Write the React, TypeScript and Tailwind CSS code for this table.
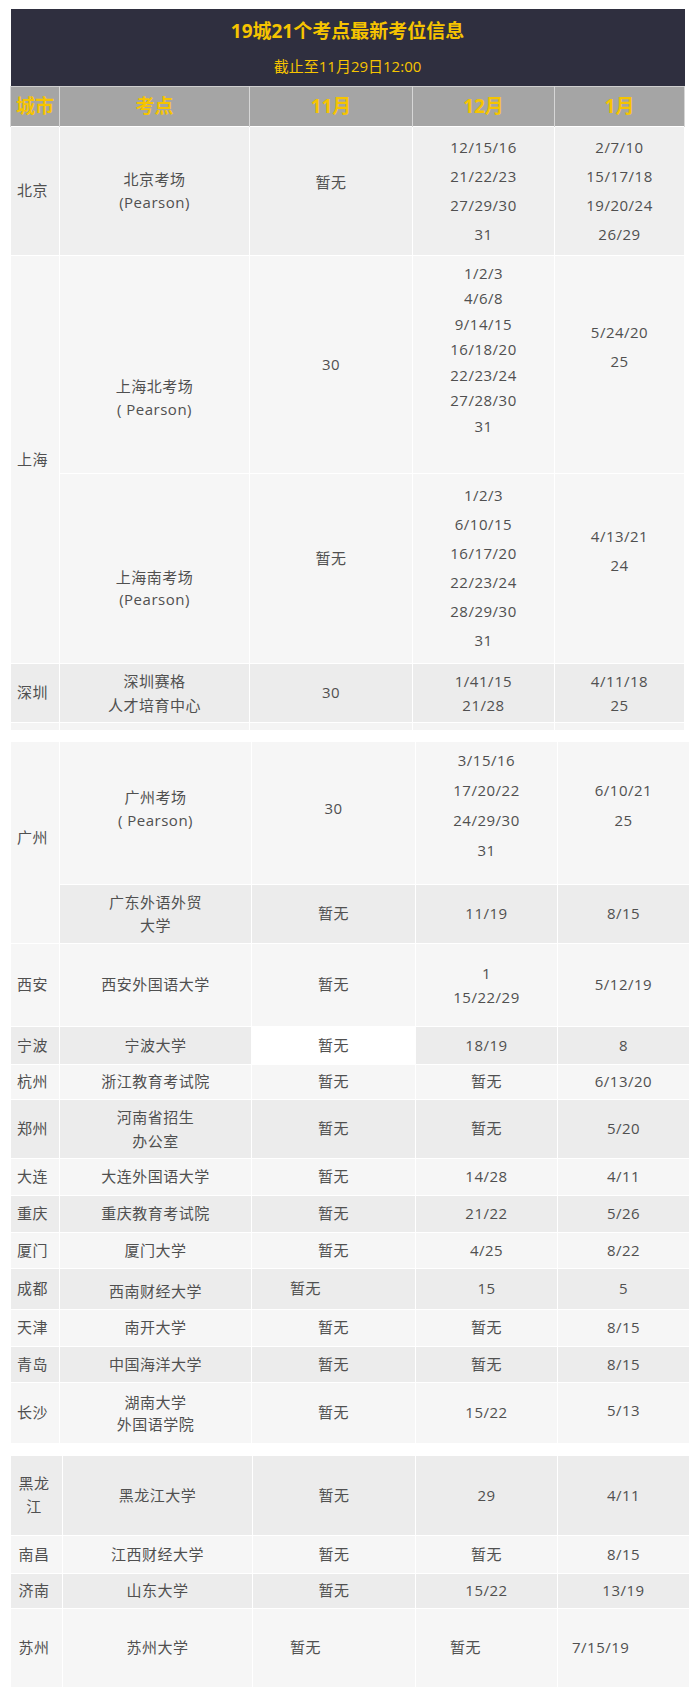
import React from "react";

const light = "bg-[#f6f6f6]";
const dark = "bg-[#ececec]";
const mid = "bg-[#efefef]";

function Lines({ items, lead = "leading-[23px]" }: { items: string[]; lead?: string }) {
  return (
    <>
      {items.map((s, i) => (
        <div key={i} className={lead}>
          {s}
        </div>
      ))}
    </>
  );
}

function Td({ children, className = "", rowSpan }: { children?: React.ReactNode; className?: string; rowSpan?: number }) {
  return (
    <td rowSpan={rowSpan} className={"border border-white p-0 text-center align-middle " + className}>
      {children}
    </td>
  );
}

// city column sits a little left of centre in the reference
const city = "pr-[5px]";

function Row({ bg, h, cells, cls = [] }: { bg: string; h: string; cells: React.ReactNode[]; cls?: string[] }) {
  return (
    <tr className={bg + " " + h}>
      {cells.map((c, i) => (
        <Td key={i} className={cls[i] ?? (i == 0 ? city : "")}>
          {c}
        </Td>
      ))}
    </tr>
  );
}

function Cols({ w }: { w: string[] }) {
  return (
    <colgroup>
      {w.map((c, i) => (
        <col key={i} className={c} />
      ))}
    </colgroup>
  );
}

const head = ["城市", "考点", "11月", "12月", "1月"];

export default function App() {
  return (
    <div className="min-h-[1695px] w-[700px] bg-white pl-[10px] pt-[9px] font-['Open_Sans','Noto_Sans_CJK_SC',sans-serif] text-[15px] tracking-[0.5px] text-[#505050]">
      {/* first part: title, header and the first four cities */}
      <table className="w-[674px] table-fixed border-collapse">
        <Cols w={["w-[49px]", "w-[190px]", "w-[163px]", "w-[142px]", "w-[130px]"]} />
        <thead>
          <tr className="h-[77px] bg-[#2f2f3f]">
            <th colSpan={5} className="p-0 align-top text-[#f6c400]">
              <div className="pt-[10px] text-[19px] font-bold leading-[24px] tracking-normal">19城21个考点最新考位信息</div>
              <div className="mt-[13px] text-[15px] font-normal leading-[20px] tracking-normal">截止至11月29日12:00</div>
            </th>
          </tr>
          <tr className="h-[40px] border-t border-[#cfcfcf] bg-[#a5a5a5]">
            {head.map((t, i) => (
              <th key={i} className="border-x border-[#d6d6d6] p-0 text-center text-[19px] font-bold tracking-normal text-[#f6c400]">
                {t}
              </th>
            ))}
          </tr>
        </thead>
        <tbody>
          <tr className={mid + " h-[129px]"}>
            <Td className={city}>北京</Td>
            <Td>
              <Lines items={["北京考场", "(Pearson)"]} />
            </Td>
            <Td className="pb-[16px]">暂无</Td>
            <Td>
              <Lines items={["12/15/16", "21/22/23", "27/29/30", "31"]} lead="leading-[29px]" />
            </Td>
            <Td>
              <Lines items={["2/7/10", "15/17/18", "19/20/24", "26/29"]} lead="leading-[29px]" />
            </Td>
          </tr>
          <tr className={light + " h-[218px]"}>
            <Td rowSpan={2} className={city}>
              上海
            </Td>
            <Td className="pt-[68px]">
              <Lines items={["上海北考场", "( Pearson)"]} />
            </Td>
            <Td>30</Td>
            <Td className="pb-[28px]">
              <Lines items={["1/2/3", "4/6/8", "9/14/15", "16/18/20", "22/23/24", "27/28/30", "31"]} lead="leading-[25.5px]" />
            </Td>
            <Td className="pb-[34px]">
              <Lines items={["5/24/20", "25"]} lead="leading-[29px]" />
            </Td>
          </tr>
          <tr className={light + " h-[190px]"}>
            <Td className="pt-[40px]">
              <Lines items={["上海南考场", "(Pearson)"]} lead="leading-[22px]" />
            </Td>
            <Td className="pb-[20px]">暂无</Td>
            <Td>
              <Lines items={["1/2/3", "6/10/15", "16/17/20", "22/23/24", "28/29/30", "31"]} lead="leading-[29px]" />
            </Td>
            <Td className="pb-[34px]">
              <Lines items={["4/13/21", "24"]} lead="leading-[29px]" />
            </Td>
          </tr>
          <Row
            bg={dark}
            h="h-[59px]"
            cells={[
              "深圳",
              <Lines items={["深圳赛格", "人才培育中心"]} lead="leading-[24px]" />,
              "30",
              <Lines items={["1/41/15", "21/28"]} lead="leading-[24px]" />,
              <Lines items={["4/11/18", "25"]} lead="leading-[24px]" />,
            ]}
          />
          <Row bg="bg-[#f4f4f4]" h="h-[8px]" cells={["", "", "", "", ""]} />
        </tbody>
      </table>

      {/* second part */}
      <table className="mt-[10px] w-[679px] table-fixed border-collapse">
        <Cols w={["w-[49px]", "w-[192px]", "w-[164px]", "w-[142px]", "w-[132px]"]} />
        <tbody>
          <tr className={light + " h-[143px]"}>
            <Td rowSpan={2} className={light + " pb-[10px] pr-[5px]"}>
              广州
            </Td>
            <Td className="pb-[8px]">
              <Lines items={["广州考场", "( Pearson)"]} />
            </Td>
            <Td className="pb-[8px]">30</Td>
            <Td className="pb-[16px]">
              <Lines items={["3/15/16", "17/20/22", "24/29/30", "31"]} lead="leading-[30px]" />
            </Td>
            <Td className="pb-[16px]">
              <Lines items={["6/10/21", "25"]} lead="leading-[30px]" />
            </Td>
          </tr>
          <tr className={dark + " h-[59px]"}>
            <Td>
              <Lines items={["广东外语外贸", "大学"]} />
            </Td>
            <Td>暂无</Td>
            <Td>11/19</Td>
            <Td>8/15</Td>
          </tr>
          <Row
            bg={light}
            h="h-[83px]"
            cells={["西安", "西安外国语大学", "暂无", <Lines items={["1", "15/22/29"]} lead="leading-[24px]" />, "5/12/19"]}
          />
          <Row bg={dark} h="h-[38px]" cells={["宁波", "宁波大学", "暂无", "18/19", "8"]} cls={[city, "", "bg-white"]} />
          <Row bg={light} h="h-[35px]" cells={["杭州", "浙江教育考试院", "暂无", "暂无", "6/13/20"]} />
          <Row
            bg={dark}
            h="h-[59px]"
            cells={["郑州", <Lines items={["河南省招生", "办公室"]} lead="leading-[24px]" />, "暂无", "暂无", "5/20"]}
          />
          <Row bg={light} h="h-[37px]" cells={["大连", "大连外国语大学", "暂无", "14/28", "4/11"]} />
          <Row bg={dark} h="h-[37px]" cells={["重庆", "重庆教育考试院", "暂无", "21/22", "5/26"]} />
          <Row bg={light} h="h-[36px]" cells={["厦门", "厦门大学", "暂无", "4/25", "8/22"]} />
          <Row
            bg={dark}
            h="h-[41px]"
            cells={["成都", "西南财经大学", "暂无", "15", "5"]}
            cls={[city, "pt-[6px]", "pl-[38px] text-left"]}
          />
          <Row bg={light} h="h-[37px]" cells={["天津", "南开大学", "暂无", "暂无", "8/15"]} />
          <Row bg={dark} h="h-[36px]" cells={["青岛", "中国海洋大学", "暂无", "暂无", "8/15"]} />
          <Row
            bg={light}
            h="h-[61px]"
            cells={["长沙", <Lines items={["湖南大学", "外国语学院"]} lead="leading-[22px]" />, "暂无", "15/22", "5/13"]}
            cls={[city, "", "", "", "pb-[4px]"]}
          />
        </tbody>
      </table>

      {/* third part */}
      <table className="mt-[11px] w-[679px] table-fixed border-collapse">
        <Cols w={["w-[52px]", "w-[190px]", "w-[163px]", "w-[142px]", "w-[132px]"]} />
        <tbody>
          <Row
            bg={dark}
            h="h-[80px]"
            cells={[<Lines items={["黑龙", "江"]} lead="leading-[23px]" />, "黑龙江大学", "暂无", "29", "4/11"]}
          />
          <Row bg={light} h="h-[38px]" cells={["南昌", "江西财经大学", "暂无", "暂无", "8/15"]} />
          <Row bg={dark} h="h-[35px]" cells={["济南", "山东大学", "暂无", "15/22", "13/19"]} />
          <Row
            bg={light}
            h="h-[79px]"
            cells={["苏州", "苏州大学", "暂无", "暂无", "7/15/19"]}
            cls={[city, "", "pl-[37px] text-left", "pl-[34px] text-left", "pl-[14px] text-left"]}
          />
        </tbody>
      </table>
    </div>
  );
}
